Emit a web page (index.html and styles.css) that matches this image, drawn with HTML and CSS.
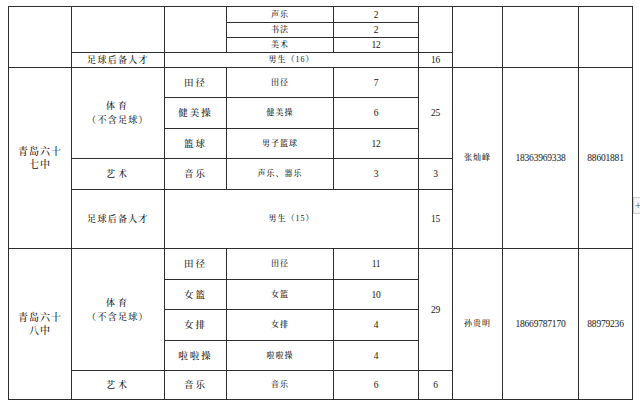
FILE: index.html
```html
<!DOCTYPE html>
<html lang="zh">
<head>
<meta charset="utf-8">
<link rel="stylesheet" href="styles.css">
</head>
<body>
<table class="grid">
  <colgroup>
    <col class="c1"><col class="c2"><col class="c3"><col class="c4"><col class="c5"><col class="c6"><col class="c7"><col class="c8"><col class="c9">
  </colgroup>
  <tbody>
    <tr class="r16">
      <td rowspan="4"></td>
      <td rowspan="3"></td>
      <td rowspan="3"></td>
      <td class="sm">声乐</td>
      <td class="num">2</td>
      <td rowspan="3"></td>
      <td rowspan="4"></td>
      <td rowspan="4"></td>
      <td rowspan="4"></td>
    </tr>
    <tr class="r15">
      <td class="sm">书法</td>
      <td class="num">2</td>
    </tr>
    <tr class="r15">
      <td class="sm">美术</td>
      <td class="num">12</td>
    </tr>
    <tr class="r15">
      <td class="cat">足球后备人才</td>
      <td colspan="3" class="sm boy">男生（16）</td>
      <td class="num">16</td>
    </tr>

    <tr class="r30">
      <td rowspan="5" class="school">青岛六十<br>七中</td>
      <td rowspan="3" class="cat"><span class="wide">体育</span><br>（不含足球）</td>
      <td class="item">田径</td>
      <td class="sm">田径</td>
      <td class="num">7</td>
      <td rowspan="3" class="num">25</td>
      <td rowspan="5" class="sm">张灿峰</td>
      <td rowspan="5" class="num">18363969338</td>
      <td rowspan="5" class="num">88601881</td>
    </tr>
    <tr class="r31">
      <td class="item">健美操</td>
      <td class="sm">健美操</td>
      <td class="num">6</td>
    </tr>
    <tr class="r30">
      <td class="item">篮球</td>
      <td class="sm">男子篮球</td>
      <td class="num">12</td>
    </tr>
    <tr class="r31">
      <td class="cat"><span class="wide">艺术</span></td>
      <td class="item">音乐</td>
      <td class="sm">声乐、器乐</td>
      <td class="num">3</td>
      <td class="num">3</td>
    </tr>
    <tr class="r59">
      <td class="cat">足球后备人才</td>
      <td colspan="3" class="sm boy">男生（15）</td>
      <td class="num">15</td>
    </tr>

    <tr class="r31">
      <td rowspan="5" class="school">青岛六十<br>八中</td>
      <td rowspan="4" class="cat"><span class="wide">体育</span><br>（不含足球）</td>
      <td class="item">田径</td>
      <td class="sm">田径</td>
      <td class="num">11</td>
      <td rowspan="4" class="num">29</td>
      <td rowspan="5" class="sm">孙贵明</td>
      <td rowspan="5" class="num">18669787170</td>
      <td rowspan="5" class="num">88979236</td>
    </tr>
    <tr class="r30">
      <td class="item">女篮</td>
      <td class="sm">女篮</td>
      <td class="num">10</td>
    </tr>
    <tr class="r31">
      <td class="item">女排</td>
      <td class="sm">女排</td>
      <td class="num">4</td>
    </tr>
    <tr class="r30">
      <td class="item">啦啦操</td>
      <td class="sm">啦啦操</td>
      <td class="num">4</td>
    </tr>
    <tr class="r29">
      <td class="cat"><span class="wide">艺术</span></td>
      <td class="item">音乐</td>
      <td class="sm">音乐</td>
      <td class="num">6</td>
      <td class="num">6</td>
    </tr>
  </tbody>
</table>
<div class="side-tab">+</div>
</body>
</html>
```

FILE: styles.css
```css
html, body {
  margin: 0;
  padding: 0;
  background: #ffffff;
}

body {
  width: 640px;
  height: 407px;
  overflow: hidden;
  position: relative;
  font-family: "Liberation Serif", "Noto Serif CJK SC", "Noto Sans CJK SC", serif;
  color: #151515;
}

.grid {
  margin: 6px 0 0 8px;
  border-collapse: collapse;
  table-layout: fixed;
  width: 624px;
}

.grid td {
  border: 1px solid #2e2e2e;
  padding: 0;
  text-align: center;
  vertical-align: middle;
  line-height: 12px;
  font-size: 9px;
  font-weight: 500;
  overflow: hidden;
  white-space: nowrap;
}

.c1 { width: 63px; }
.c2 { width: 93px; }
.c3 { width: 62px; }
.c4 { width: 107px; }
.c5 { width: 85px; }
.c6 { width: 34px; }
.c7 { width: 50px; }
.c8 { width: 76px; }
.c9 { width: 54px; }

.r15 { height: 15px; }
.r16 { height: 16px; }
.r29 { height: 29px; }
.r30 { height: 30px; }
.r31 { height: 31px; }
.r59 { height: 59px; }

.grid td.sm {
  font-size: 8px;
  letter-spacing: 1px;
}

.grid td.num {
  font-size: 9.5px;
  letter-spacing: -0.2px;
}

.grid td.item {
  font-size: 9.5px;
  letter-spacing: 2px;
}

.grid td.cat {
  font-size: 9px;
  letter-spacing: 1.3px;
  line-height: 14px;
}

.wide {
  letter-spacing: 3px;
}

.grid td.school {
  font-size: 10px;
  letter-spacing: 1px;
  line-height: 13px;
}

.side-tab {
  position: absolute;
  left: 633px;
  top: 197px;
  width: 8px;
  height: 15px;
  border: 1px solid #cfcfcf;
  border-right: none;
  background: #f4f4f4;
  color: #777;
  font-family: "DejaVu Sans", sans-serif;
  font-size: 8px;
  line-height: 15px;
  text-align: center;
}
```
